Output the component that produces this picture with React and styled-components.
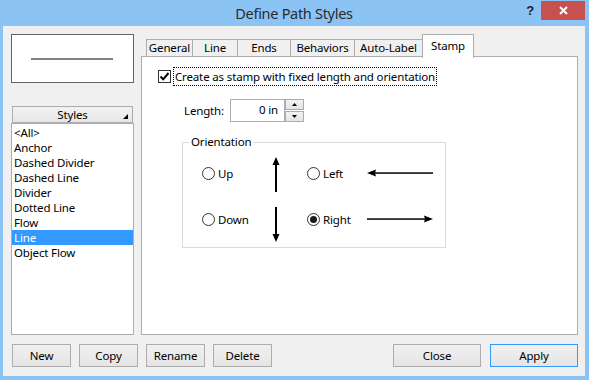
import React from 'react';
import styled, { createGlobalStyle } from 'styled-components';

const Global = createGlobalStyle`
  html, body {
    margin: 0;
    padding: 0;
    width: 589px;
    height: 380px;
    overflow: hidden;
    background: #8ac3f4;
  }
  * { box-sizing: border-box; }
  body {
    font-family: "Noto Sans", "Open Sans", sans-serif;
    font-size: 11.5px;
    letter-spacing: -0.15px;
    color: #000;
  }
`;

const Frame = styled.div`
  width: 589px;
  height: 380px;
  background: #8ac3f4;
  padding: 0 4px 4px 3px;
  display: flex;
  flex-direction: column;
`;

const TitleBar = styled.div`
  height: 26px;
  display: grid;
  grid-template-columns: 1fr auto 1fr;
`;

const Title = styled.div`
  grid-column: 2;
  font-size: 14.5px;
  line-height: 26px;
  color: #2b2b2b;
  letter-spacing: -0.3px;
`;

const TitleButtons = styled.div`
  grid-column: 3;
  display: flex;
  justify-content: flex-end;
  align-items: flex-start;
`;

const HelpGlyph = styled.span`
  font-family: "Liberation Sans", sans-serif;
  font-weight: bold;
  font-size: 13px;
  line-height: 22px;
  color: #1e1e1e;
  margin-right: 7px;
`;

const CloseBox = styled.div`
  width: 44px;
  height: 19px;
  margin-top: 1px;
  background: #c75050;
  display: flex;
  align-items: center;
  justify-content: center;
`;

const Client = styled.div`
  flex: 1;
  background: #f0f0f0;
  padding: 8px 7px 9px 8px;
  display: flex;
  flex-direction: column;
`;

const Main = styled.div`
  height: 301px;
  display: flex;
  gap: 7px;
`;

const LeftCol = styled.div`
  width: 123px;
  display: flex;
  flex-direction: column;
`;

const Preview = styled.div`
  height: 49px;
  border: 1px solid #646464;
  background: #fff;
  display: flex;
  align-items: center;
  justify-content: center;
`;

const PreviewLine = styled.div`
  width: 82px;
  height: 2px;
  background: #808080;
  margin-left: -2px;
`;

const StylesHeader = styled.div`
  position: relative;
  margin: 23px 1px 0;
  height: 17px;
  border: 1px solid #adadad;
  background: linear-gradient(#f2f2f2, #e6e6e6);
  text-align: center;
  line-height: 15px;
`;

const SortMark = styled.svg`
  position: absolute;
  right: 4px;
  bottom: 3px;
`;

const List = styled.div`
  flex: 1;
  border: 1px solid #adadad;
  background: #fff;
  padding-top: 1px;
`;

const Item = styled.div`
  height: 15px;
  line-height: 15px;
  padding-left: 2px;
  background: ${p => (p.$selected ? '#3399ff' : 'transparent')};
  color: ${p => (p.$selected ? '#fff' : '#000')};
  white-space: nowrap;
`;

const RightCol = styled.div`
  width: 437px;
  display: flex;
  flex-direction: column;
`;

const TabRow = styled.div`
  height: 23px;
  display: flex;
  align-items: flex-end;
  padding-left: 5px;
  position: relative;
  z-index: 1;
`;

const Tab = styled.div`
  width: ${p => p.$w}px;
  height: ${p => (p.$active ? 24 : 18)}px;
  margin-bottom: ${p => (p.$active ? -1 : 0)}px;
  margin-left: ${p => (p.$first ? 0 : -1)}px;
  border: 1px solid #acacac;
  border-bottom: ${p => (p.$active ? 'none' : '1px solid #acacac')};
  background: ${p => (p.$active ? '#fff' : '#f0f0f0')};
  padding-top: ${p => (p.$active ? 3 : 0)}px;
  text-align: center;
  line-height: 16px;
  white-space: nowrap;
`;

const Panel = styled.div`
  flex: 1;
  margin-top: -1px;
  border: 1px solid #adadad;
  background: #fff;
  padding: 10px 0 0 16px;
  display: flex;
  flex-direction: column;
`;

const CheckRow = styled.div`
  display: flex;
  align-items: center;
  gap: 2px;
`;

const CheckBox = styled.div`
  width: 13px;
  height: 13px;
  border: 1px solid #333;
  background: #fff;
  display: flex;
  align-items: center;
  justify-content: center;
`;

const FocusLabel = styled.span`
  border: 1px dotted #000;
  height: 19px;
  line-height: 17px;
  padding: 0 1px 0 1px;
  white-space: nowrap;
`;

const LengthRow = styled.div`
  margin: 13px 0 0 26px;
  display: flex;
  align-items: center;
  height: 23px;
`;

const FieldLabel = styled.span`
  width: 46px;
`;

const NumberInput = styled.div`
  width: 55px;
  height: 23px;
  border: 1px solid #abadb3;
  background: #fff;
  text-align: right;
  padding-right: 6px;
  line-height: 20px;
`;

const Spinner = styled.div`
  display: flex;
  flex-direction: column;
  align-self: stretch;
`;

const SpinButton = styled.div`
  width: 19px;
  height: ${p => p.$h}px;
  border: 1px solid #acacac;
  margin-top: ${p => (p.$down ? 1 : 0)}px;
  background: linear-gradient(#f2f2f2, #e5e5e5);
  display: flex;
  align-items: center;
  justify-content: center;
`;

const Group = styled.fieldset`
  margin: 12px 0 0 24px;
  padding: 0 0 5px 19px;
  width: 264px;
  border: 1px solid #dcdcdc;
  min-width: 0;
`;

const Legend = styled.legend`
  margin-left: -13px;
  padding: 0 2px;
  line-height: 16px;
`;

const Orient = styled.div`
  display: grid;
  grid-template-columns: 68px 12px 25px 60px 66px;
  grid-template-rows: 46px 46px;
  align-items: center;
`;

const Radio = styled.label`
  display: flex;
  align-items: center;
  gap: 3px;
  grid-column: ${p => p.$col};
`;

const Circle = styled.span`
  width: 13px;
  height: 13px;
  border-radius: 50%;
  border: 1px solid #333;
  background: #fff;
  display: flex;
  align-items: center;
  justify-content: center;
`;

const Dot = styled.span`
  width: 7px;
  height: 7px;
  border-radius: 50%;
  background: #1a1a1a;
`;

const ArrowCell = styled.svg`
  grid-column: ${p => p.$col};
  display: block;
`;

const ButtonRow = styled.div`
  margin-top: 9px;
  height: 23px;
  display: flex;
  padding-left: 1px;
`;

const ButtonGroup = styled.div`
  display: flex;
  gap: ${p => p.$gap}px;
  margin-left: ${p => (p.$right ? 'auto' : 0)};
`;

const Button = styled.div`
  width: ${p => p.$w}px;
  height: 23px;
  border: 1px solid ${p => (p.$default ? '#3399ff' : '#adadad')};
  background: linear-gradient(#f0f0f0, #e5e5e5);
  text-align: center;
  line-height: 21px;
`;

const styles = ['<All>', 'Anchor', 'Dashed Divider', 'Dashed Line', 'Divider', 'Dotted Line', 'Flow', 'Line', 'Object Flow'];

const tabs = [
  { label: 'General', w: 47 },
  { label: 'Line', w: 46 },
  { label: 'Ends', w: 54 },
  { label: 'Behaviors', w: 65 },
  { label: 'Auto-Label', w: 69 },
  { label: 'Stamp', w: 52, active: true },
];

const UpArrow = () => (
  <ArrowCell $col={2} width="12" height="46" viewBox="0 0 12 46" style={{ gridRow: 1 }}>
    <rect x="5" y="13" width="2" height="29" fill="#000" />
    <polygon points="6,7 9.5,15 2.5,15" fill="#000" />
  </ArrowCell>
);

const DownArrow = () => (
  <ArrowCell $col={2} width="12" height="46" viewBox="0 0 12 46" style={{ gridRow: 2 }}>
    <rect x="5" y="11" width="2" height="29" fill="#000" />
    <polygon points="6,46 9.5,38 2.5,38" fill="#000" />
  </ArrowCell>
);

const LeftArrow = () => (
  <ArrowCell $col={5} width="66" height="10" viewBox="0 0 66 10" style={{ gridRow: 1 }}>
    <rect x="7" y="4.3" width="59" height="1.5" fill="#000" />
    <polygon points="0,5 9,1.5 8,5 9,8.5" fill="#000" />
  </ArrowCell>
);

const RightArrow = () => (
  <ArrowCell $col={5} width="66" height="10" viewBox="0 0 66 10" style={{ gridRow: 2 }}>
    <rect x="0" y="4.3" width="59" height="1.5" fill="#000" />
    <polygon points="66,5 57,1.5 58,5 57,8.5" fill="#000" />
  </ArrowCell>
);

export default function App() {
  return (
    <>
      <Global />
      <Frame>
        <TitleBar>
          <Title>Define Path Styles</Title>
          <TitleButtons>
            <HelpGlyph>?</HelpGlyph>
            <CloseBox>
              <svg width="9" height="9" viewBox="0 0 9 9">
                <path d="M1 1 L8 8 M8 1 L1 8" stroke="#fff" strokeWidth="2" />
              </svg>
            </CloseBox>
          </TitleButtons>
        </TitleBar>
        <Client>
          <Main>
            <LeftCol>
              <Preview>
                <PreviewLine />
              </Preview>
              <StylesHeader>
                Styles
                <SortMark width="5" height="5" viewBox="0 0 5 5">
                  <polygon points="5,0 5,5 0,5" fill="#000" />
                </SortMark>
              </StylesHeader>
              <List>
                {styles.map(s => (
                  <Item key={s} $selected={s === 'Line'}>{s}</Item>
                ))}
              </List>
            </LeftCol>
            <RightCol>
              <TabRow>
                {tabs.map((t, i) => (
                  <Tab key={t.label} $w={t.w} $active={t.active} $first={i === 0}>{t.label}</Tab>
                ))}
              </TabRow>
              <Panel>
                <CheckRow>
                  <CheckBox>
                    <svg width="11" height="11" viewBox="0 0 11 11">
                      <path d="M1.5 5.5 L4.2 8.3 L9.5 2" stroke="#000" strokeWidth="2" fill="none" />
                    </svg>
                  </CheckBox>
                  <FocusLabel>Create as stamp with fixed length and orientation</FocusLabel>
                </CheckRow>
                <LengthRow>
                  <FieldLabel>Length:</FieldLabel>
                  <NumberInput>0 in</NumberInput>
                  <Spinner>
                    <SpinButton $h={11}>
                      <svg width="5" height="3" viewBox="0 0 5 3"><polygon points="2.5,0 5,3 0,3" fill="#000" /></svg>
                    </SpinButton>
                    <SpinButton $h={11} $down>
                      <svg width="5" height="3" viewBox="0 0 5 3"><polygon points="0,0 5,0 2.5,3" fill="#000" /></svg>
                    </SpinButton>
                  </Spinner>
                </LengthRow>
                <Group>
                  <Legend>Orientation</Legend>
                  <Orient>
                    <Radio $col={1} style={{ gridRow: 1 }}><Circle />Up</Radio>
                    <UpArrow />
                    <Radio $col={4} style={{ gridRow: 1 }}><Circle />Left</Radio>
                    <LeftArrow />
                    <Radio $col={1} style={{ gridRow: 2 }}><Circle />Down</Radio>
                    <DownArrow />
                    <Radio $col={4} style={{ gridRow: 2 }}><Circle><Dot /></Circle>Right</Radio>
                    <RightArrow />
                  </Orient>
                </Group>
              </Panel>
            </RightCol>
          </Main>
          <ButtonRow>
            <ButtonGroup $gap={8}>
              <Button $w={59}>New</Button>
              <Button $w={59}>Copy</Button>
              <Button $w={59}>Rename</Button>
              <Button $w={59}>Delete</Button>
            </ButtonGroup>
            <ButtonGroup $gap={9} $right>
              <Button $w={88}>Close</Button>
              <Button $w={88} $default>Apply</Button>
            </ButtonGroup>
          </ButtonRow>
        </Client>
      </Frame>
    </>
  );
}
